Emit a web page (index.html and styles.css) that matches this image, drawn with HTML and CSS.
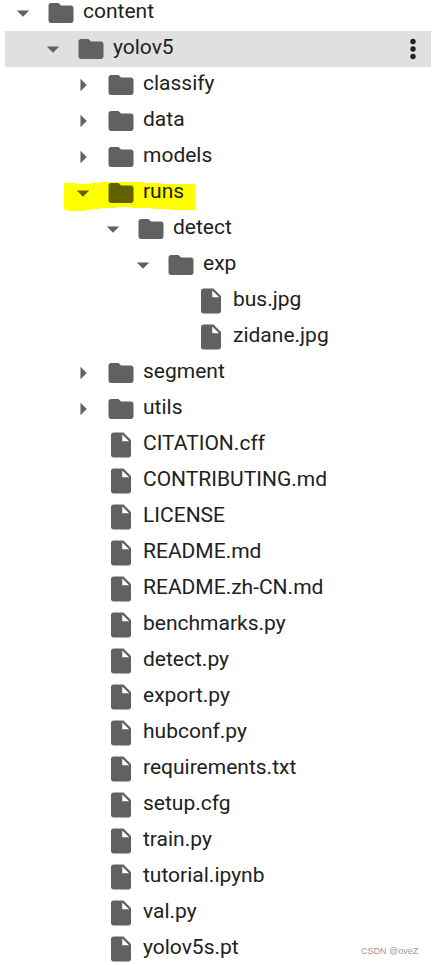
FILE: index.html
```
<!DOCTYPE html>
<html lang="en">
<head>
<meta charset="utf-8">
<title>Files</title>
<link rel="stylesheet" href="styles.css">
</head>
<body>
<svg class="defs" aria-hidden="true">
  <symbol id="folder" viewBox="0 0 24 24"><path d="M10 4H4c-1.100 0-2 .9-2 2v12c0 1.100.9 2 2 2h16c1.100 0 2-.9 2-2V8c0-1.100-.9-2-2-2h-8l-2-2z"/></symbol>
  <symbol id="file" viewBox="0 0 24 24"><path d="M6 2c-1.100 0-2 .9-2 2v16c0 1.100.9 2 2 2h12c1.100 0 2-.9 2-2V8l-6-6H6zm7 7V3.500L18.500 9H13z"/></symbol>
  <symbol id="down" viewBox="0 0 24 24"><path d="M7 10l5 5 5-5z"/></symbol>
  <symbol id="right" viewBox="0 0 24 24"><path d="M10 17l5-5-5-5z"/></symbol>
  <symbol id="more" viewBox="0 0 24 24"><circle cx="12" cy="6" r="2.150"/><circle cx="12" cy="12" r="2.150"/><circle cx="12" cy="18" r="2.150"/></symbol>
</svg>
<main class="tree" id="tree"></main>
<div class="watermark">CSDN @oveZ</div>
<script src="tree.js"></script>
</body>
</html>
```
FILE: styles.css
```
body {
  margin: 0;
  background: #fff;
  font-family: Roboto, sans-serif;
  overflow: hidden;
}
.defs {
  display: none;
}
.tree {
  height: 965px;
  overflow: hidden;
  padding: 0 2px 0 5px;
  box-sizing: border-box;
}
.row {
  display: flex;
  align-items: center;
  height: 36px;
  box-sizing: border-box;
  padding-right: 3px;
  position: relative;
}
.row:first-child {
  margin-top: -5px;
}
.row.selected {
  background: #e0e0e0;
}
.level-0 { padding-left: 3px; }
.level-1 { padding-left: 33px; }
.level-2 { padding-left: 63px; }
.level-3 { padding-left: 93px; }
.level-4 { padding-left: 123px; }
.level-5 { padding-left: 153px; }
.icon {
  width: 30px;
  height: 30px;
  fill: #616161;
  flex: none;
  position: relative;
}
.toggle {
  width: 30px;
  height: 30px;
  margin-right: 8px;
  flex: none;
}
.name {
  position: relative;
  margin: 0 auto 5px 7px;
  font-size: 21px;
  line-height: 30px;
  color: #212121;
  white-space: nowrap;
}
.more {
  fill: #212121;
}
.marker {
  position: absolute;
  left: 59px;
  top: 7px;
  width: 132px;
  height: 29px;
  fill: #ff0;
}
.marked .icon {
  fill: #616100;
}
.marked .name {
  color: #212100;
}
.watermark {
  position: absolute;
  left: 361px;
  top: 945px;
  font: 9px/13px "Liberation Sans", sans-serif;
  color: #999;
  white-space: nowrap;
}
```
FILE: tree.js
```
const items = [
  [0, "down", "content"],
  [1, "down", "yolov5", "selected"],
  [2, "right", "classify"],
  [2, "right", "data"],
  [2, "right", "models"],
  [2, "down", "runs", "marked"],
  [3, "down", "detect"],
  [4, "down", "exp"],
  [5, "", "bus.jpg"],
  [5, "", "zidane.jpg"],
  [2, "right", "segment"],
  [2, "right", "utils"],
  ...["CITATION.cff", "CONTRIBUTING.md", "LICENSE", "README.md", "README.zh-CN.md",
    "benchmarks.py", "detect.py", "export.py", "hubconf.py", "requirements.txt",
    "setup.cfg", "train.py", "tutorial.ipynb", "val.py", "yolov5s.pt"].map(n => [2, "", n])
];
const icon = id => `<svg class="icon ${id}" viewBox="0 0 24 24"><use href="#${id}"/></svg>`;
const marker = '<svg class="marker" viewBox="0 0 132 29"><path d="M0 1H13V2H26V1H36V0H80V1H97V2H131V28H106V27H89V26H68V25H54V26H37V27H28V28H22V29H4V28H0Z"/></svg>';
document.getElementById("tree").innerHTML = items.map(([level, arrow, name, state = ""]) => `
  <div class="row level-${level} ${state}">
    ${state === "marked" ? marker : ""}
    <div class="toggle">${arrow ? icon(arrow) : ""}</div>
    ${icon(arrow ? "folder" : "file")}
    <span class="name">${name}</span>
    ${state === "selected" ? icon("more") : ""}
  </div>`).join("");
```
